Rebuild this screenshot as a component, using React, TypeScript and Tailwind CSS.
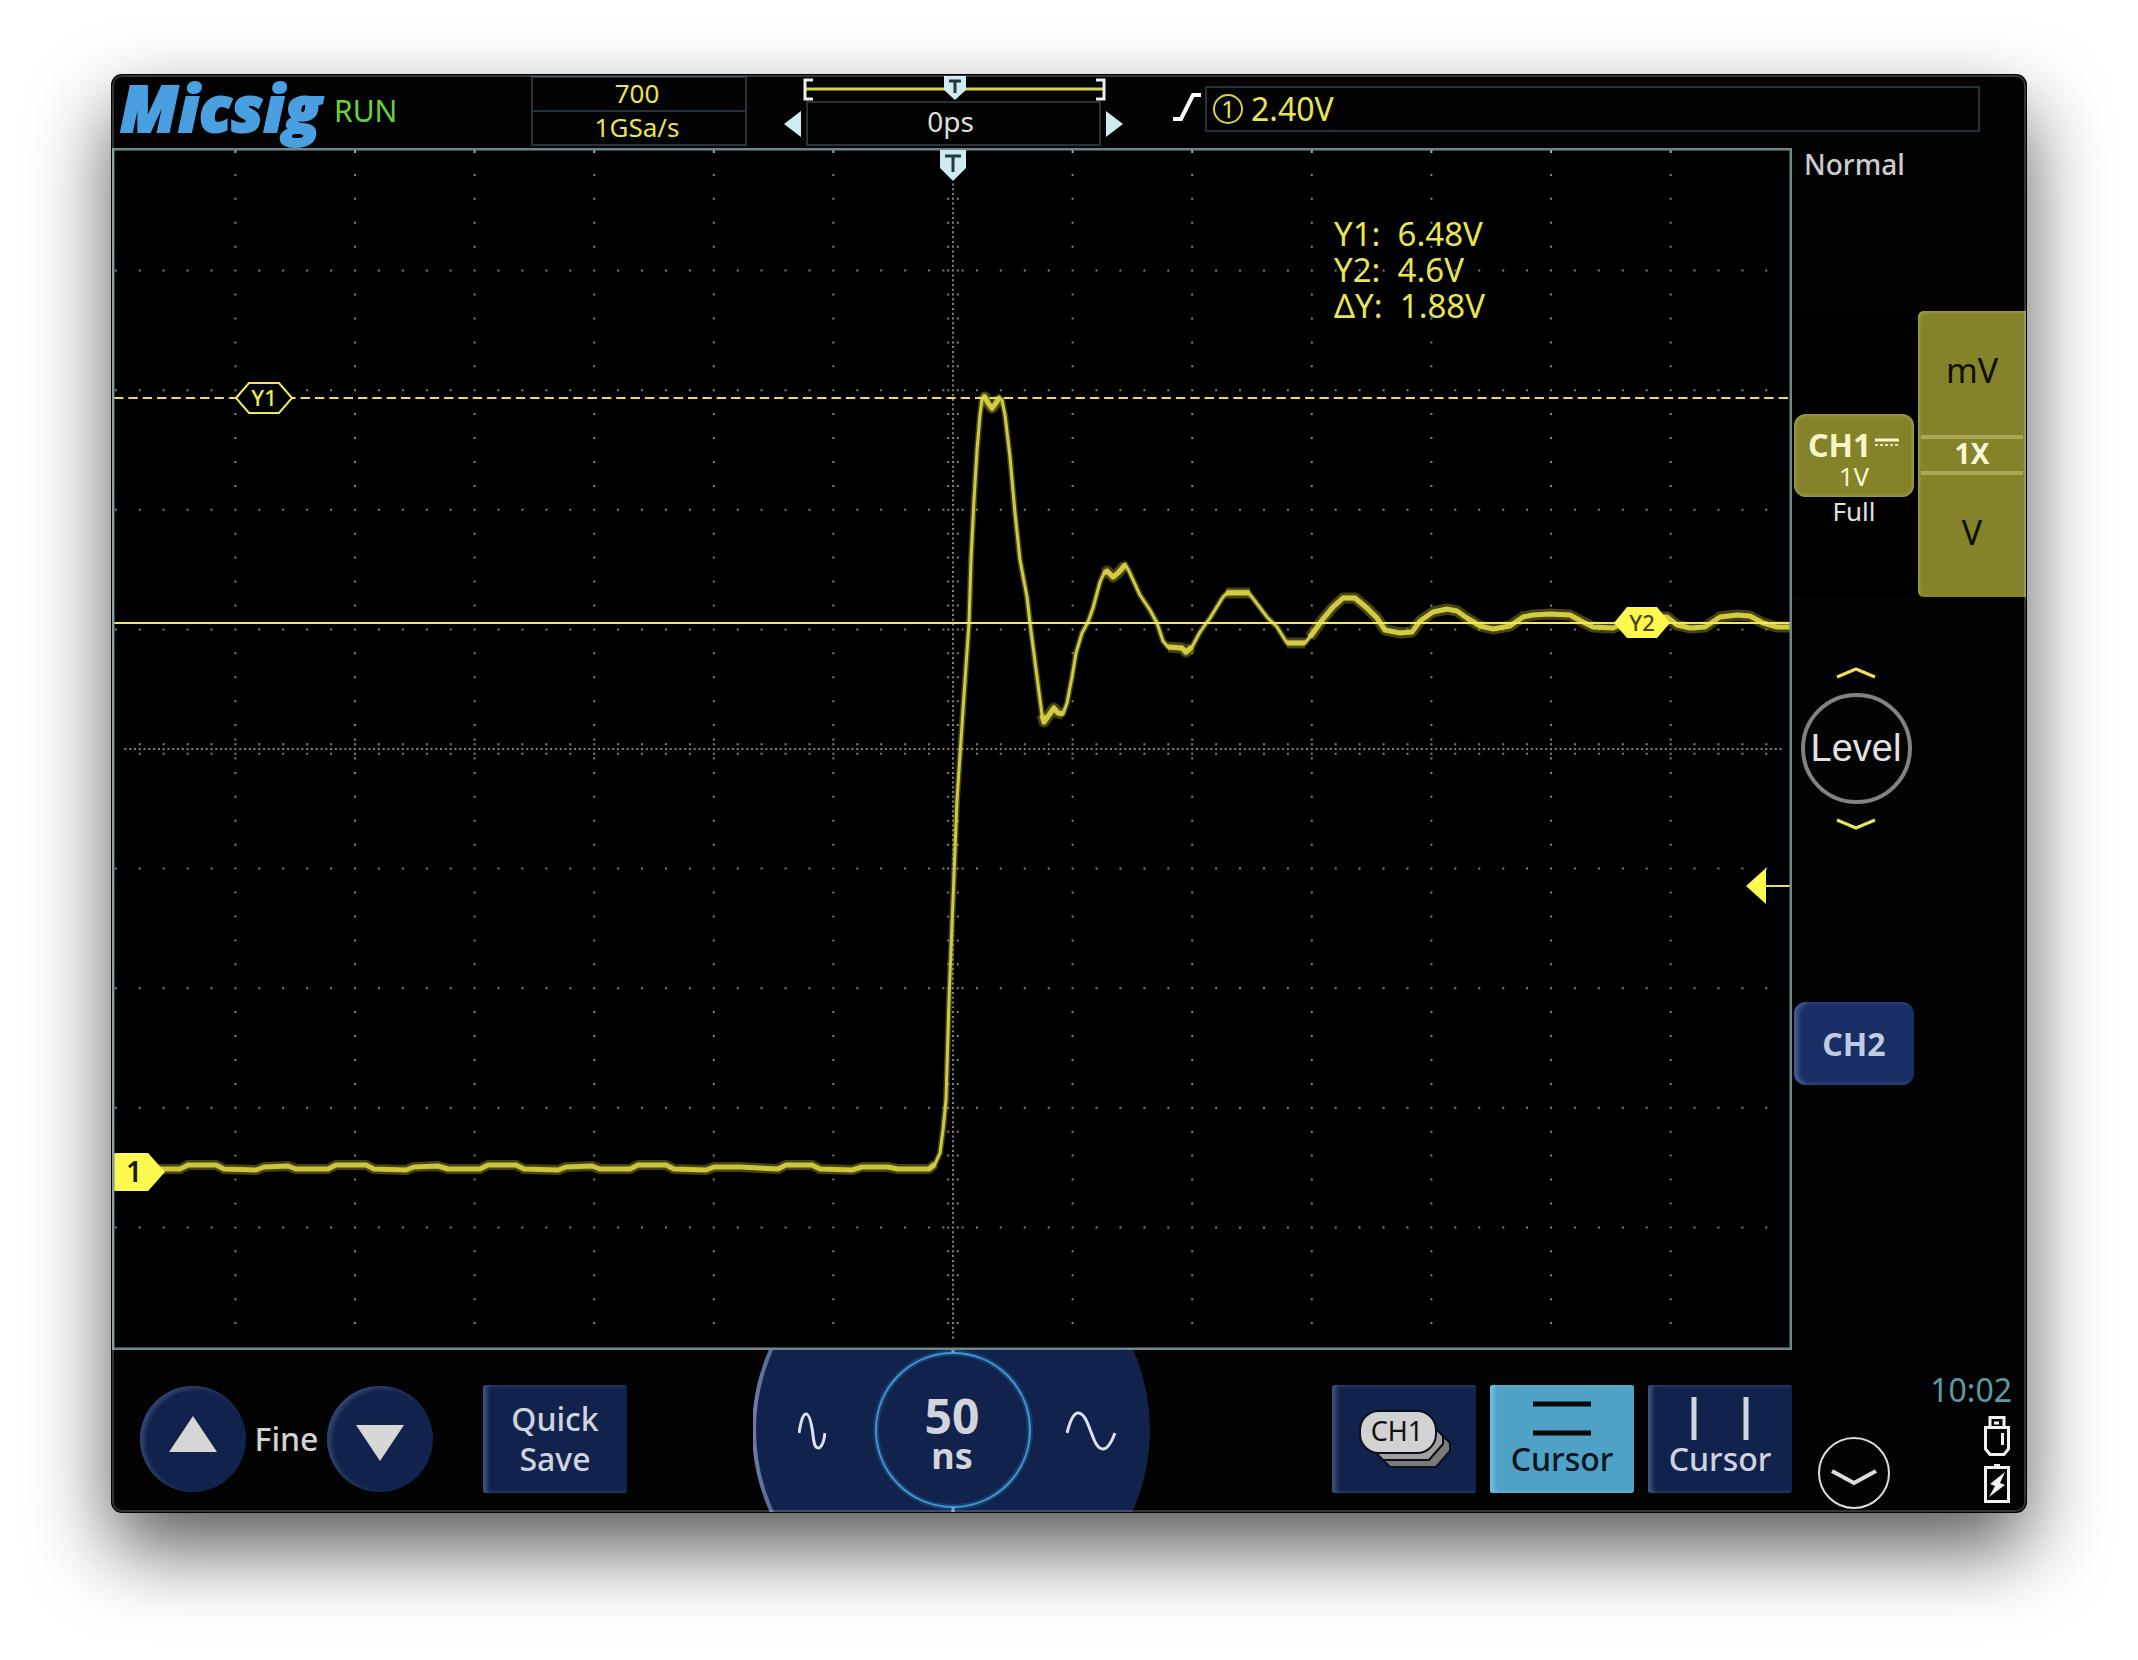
import React from "react";

const YELLOW = "#e8e455";

/* ---------- plot geometry ---------- */
const CX = 953;
const CY = 749;
const DIV = 598 / 5;
const MINOR = DIV / 5;
const FINE = MINOR / 5;

function buildDots(): string {
  const pts: [number, number][] = [];
  for (let r = -4; r <= 4; r++) {
    if (r === 0) continue;
    for (let i = -35; i < 35; i++) pts.push([CX + i * MINOR, CY + r * DIV]);
    for (const k of [-2, -1, 1, 2]) pts.push([CX + k * FINE, CY + r * DIV]);
  }
  for (let c = -6; c <= 6; c++) {
    if (c === 0) continue;
    for (let j = -24; j <= 24; j++) {
      if (j % 5 !== 0) pts.push([CX + c * DIV, CY + j * MINOR]);
    }
    for (const k of [-2, -1, 1, 2]) pts.push([CX + c * DIV, CY + k * FINE]);
  }
  for (let i = -173; i <= 173; i++) pts.push([CX + i * FINE, CY]);
  for (let j = -118; j <= 123; j++) pts.push([CX, CY + j * FINE]);
  for (let i = -34; i <= 34; i++) {
    pts.push([CX + i * MINOR, CY - FINE], [CX + i * MINOR, CY + FINE]);
  }
  for (let j = -23; j <= 24; j++) {
    pts.push([CX - FINE, CY + j * MINOR], [CX + FINE, CY + j * MINOR]);
  }
  return pts.map(([x, y]) => `M${(x - 1).toFixed(1)} ${y.toFixed(1)}h2`).join("");
}

const DOTS = buildDots();
const STUBS = Array.from({ length: 13 }, (_, i) => `M${(CX + (i - 6) * DIV).toFixed(1)} 150v3`).join("");

const BASELINE =
  "M150 1169L180 1169L188 1165L216 1165L224 1169L256 1170L264 1167L288 1166L296 1169L328 1169L336 1165L366 1165L374 1169L406 1170L414 1167L438 1166L448 1169L480 1169L488 1165L516 1165L524 1169L558 1170L566 1167L592 1166L600 1169L630 1169L638 1165L666 1165L674 1169L706 1170L714 1167L740 1167L778 1169L786 1165L812 1165L820 1169L852 1170L862 1167L888 1167L898 1169L929 1169L935 1164";
const RISE =
  "M929 1169L935 1164L940 1153L943 1130L946 1100L949 1000L953 900L957 800L963 710L969 623L971 560L974 500L977 450L980 415L982 399L984 396L988 403L992 409L996 403L999 397L1002 400L1005 415L1010 457L1015 513L1020 560L1027 597L1030 623L1037 677L1042 715L1044 722L1049 715L1054 708L1058 713L1063 714L1067 703L1072 677L1076 653L1082 633L1088 622L1093 608L1100 582L1104 573L1107 571L1113 577L1119 572L1125 564L1129 571L1140 595L1150 610L1157 623L1163 641L1168 647L1182 648L1186 653L1192 647L1200 632L1210 618L1223 597L1228 592L1248 592L1255 601L1267 617L1277 627L1287 643L1305 643L1313 633L1323 619L1333 607L1343 598L1355 598L1367 608L1377 618L1385 630";
const CRESTS =
  "M983 400L985 397L988 403L992 408L996 403L999 398M1042 715L1044 722L1049 715L1054 708L1058 713L1063 714M1104 573L1107 571L1113 577L1119 572L1125 565M1168 647L1182 648L1186 652L1192 647M1226 593L1250 593M1287 643L1305 643M1310 637L1323 619L1333 607L1343 598L1355 598L1367 608L1377 618L1385 630L1400 633L1412 632L1420 621L1433 612L1447 609L1457 611L1467 618L1480 626L1493 629L1510 626L1523 617L1533 615L1550 614L1570 615L1583 622L1593 627L1613 628L1640 616L1667 617L1677 625L1690 628L1705 627L1720 617L1737 615L1750 616L1763 623L1777 627L1790 627";

function Plot() {
  return (
    <svg
      viewBox="112 148 1680 1202"
      className="block h-auto w-full bg-black"
      role="img"
      aria-label="Channel 1 step response"
    >
      <path d={DOTS} stroke="#7d8282" strokeWidth="2" fill="none" />
      <path d={STUBS} stroke="#8fb4b8" strokeWidth="2" fill="none" />
      <path d={BASELINE} stroke="#8a8626" strokeWidth="10" fill="none" opacity="0.5" strokeLinejoin="round" />
      <path d={CRESTS} stroke="#8a8626" strokeWidth="11" fill="none" opacity="0.5" strokeLinejoin="round" />
      <path d={RISE} stroke="#8a8626" strokeWidth="6" fill="none" opacity="0.5" strokeLinejoin="round" />
      <path d={BASELINE} stroke="#cdc63c" strokeWidth="5" fill="none" strokeLinejoin="round" />
      <path d={RISE} stroke="#cfc945" strokeWidth="3" fill="none" strokeLinejoin="round" />
      <path d={CRESTS} stroke="#d3cc40" strokeWidth="5" fill="none" strokeLinejoin="round" />
      <path d="M114 623H1790" stroke="#f0ea5a" strokeWidth="2" />
      <path d="M114 398H1790" stroke="#e5df55" strokeWidth="2" strokeDasharray="9.4 4.95" />
      {/* Y1 tag */}
      <path d="M236 398L249 383H279L292 398L279 413H249Z" fill="#000" stroke="#f0ea5a" strokeWidth="2" />
      <text x="264" y="406" textAnchor="middle" fontFamily="Noto Sans, sans-serif" fontSize="22" fontWeight="500" fill="#f0ea5a">Y1</text>
      {/* Y2 tag */}
      <path d="M1614 623L1627 607H1657L1670 623L1657 638H1627Z" fill="#fdf94e" />
      <text x="1642" y="631" textAnchor="middle" fontFamily="Noto Sans, sans-serif" fontSize="22" fontWeight="500" fill="#4a4812">Y2</text>
      {/* channel zero tag */}
      <path d="M114 1153H148L165 1172L148 1191H114Z" fill="#fdf94e" />
      <text x="134" y="1182" textAnchor="middle" fontFamily="Noto Sans, sans-serif" fontSize="28" fontWeight="600" fill="#1c1b05">1</text>
      {/* trigger level arrow */}
      <path d="M1746 886L1766 868V904Z" fill="#fdf94e" />
      <path d="M1764 886H1790" stroke="#e8e24f" strokeWidth="2" />
      <rect x="113" y="149" width="1678" height="1200" fill="none" stroke="#6d878b" strokeWidth="3" />
      {/* trigger position */}
      <path d="M940 150H966V168L953 181L940 168Z" fill="#cdebf0" />
      <path d="M945 156H961M953 156V172" stroke="#22383c" strokeWidth="3" />
      {/* cursor readout */}
      <g fontFamily="Noto Sans, sans-serif" fontSize="33" fill={YELLOW}>
        <text x="1334" y="246" className="whitespace-pre">{"Y1:  6.48V"}</text>
        <text x="1334" y="282" className="whitespace-pre">{"Y2:  4.6V"}</text>
        <text x="1334" y="318" className="whitespace-pre">{"ΔY:  1.88V"}</text>
      </g>
    </svg>
  );
}

function Header() {
  return (
    <header className="flex h-[73px] items-start pr-[46px]">
      <div className="flex h-full w-[419px] shrink-0 items-start pl-2">
        <span className="w-[214px] font-['Open_Sans',sans-serif] text-[64px] leading-[66px] font-extrabold text-[#4a9fe0] italic [-webkit-text-stroke:2px_#4a9fe0]">
          Micsig
        </span>
        <span className="mt-[18px] text-[30px] leading-9 text-[#6ad03c]">RUN</span>
      </div>
      <div className="mt-px w-[216px] shrink-0 border-2 border-[#27333b] text-center text-[26px] leading-[30px] text-[#e8e455]">
        <div className="h-[34px] border-b-2 border-[#27333b] pr-1">700</div>
        <div className="h-8 pr-1">1GSa/s</div>
      </div>
      <div className="mt-px ml-[37px] w-[340px] shrink-0">
        <svg viewBox="0 0 340 25" className="block w-full" aria-hidden="true">
          <path d="M21 13H321" stroke="#d8d24a" strokeWidth="3" />
          <path d="M29 4H21V23H29M312 4H320V23H312" stroke="#eee" strokeWidth="3" fill="none" />
          <path d="M160 0H182V14L171 24L160 14Z" fill="#cdebf0" />
          <path d="M165 5H177M171 5V17" stroke="#22383c" strokeWidth="3" />
        </svg>
        <div className="flex items-center">
          <button aria-label="Shift left">
            <svg viewBox="0 0 18 28" className="block h-7 w-[18px]"><path d="M0 14L17 1V27Z" fill="#cdebf0" /></svg>
          </button>
          <div className="mx-1 h-[45px] w-[295px] border-2 border-[#27333b] pr-1.5 text-center text-[28px] leading-[37px] text-[#dedede]">
            0ps
          </div>
          <button aria-label="Shift right">
            <svg viewBox="0 0 18 28" className="block h-7 w-[18px]"><path d="M18 14L1 1V27Z" fill="#cdebf0" /></svg>
          </button>
        </div>
      </div>
      <svg viewBox="0 0 28 30" className="mt-[17px] ml-[49px] h-[30px] w-7 shrink-0" aria-label="Rising edge">
        <path d="M0 27H8L20 3H28" stroke="#fff" strokeWidth="4" fill="none" />
      </svg>
      <div className="mt-[11px] ml-1 flex h-[46px] min-w-0 flex-1 items-center gap-2 border-2 border-[#27333b] pl-1.5 text-[32px] leading-9 text-[#e8e455]">
        <span className="flex h-[30px] w-[30px] items-center justify-center rounded-full border-2 border-[#d8d24a] text-2xl leading-6">1</span>
        <span>2.40V</span>
      </div>
    </header>
  );
}

function BlueButton({ active, label, children }: { active?: boolean; label?: string; children: React.ReactNode }) {
  return (
    <button
      aria-label={label}
      className={
        active
          ? "flex h-[108px] w-36 flex-col items-center rounded-[3px] bg-[#4fa1c6] text-[#06141c] shadow-[inset_4px_0_4px_#6fc0e0]"
          : "flex h-[108px] w-36 flex-col items-center rounded-[3px] bg-[#11234d] text-[#cfd3df] shadow-[inset_4px_0_4px_#42547f]"
      }
    >
      {children}
    </button>
  );
}

function RoundButton({ down, label }: { down?: boolean; label: string }) {
  return (
    <button
      aria-label={label}
      className="flex h-[106px] w-[106px] items-center justify-center rounded-full bg-[#11234d] shadow-[inset_4px_2px_4px_#34466f]"
    >
      <svg viewBox="0 0 106 106" className="block h-full w-full">
        <path d={down ? "M29 39H77L53 75Z" : "M53 30L77 66H29Z"} fill="#d6d6d6" />
      </svg>
    </button>
  );
}

function Dial() {
  return (
    <div className="relative h-[162px] w-[398px] overflow-hidden">
      <svg viewBox="0 0 398 162" className="absolute inset-0 h-full w-full" aria-hidden="true">
        <defs>
          <linearGradient id="rim" x1="0" x2="1" y1="0" y2="0">
            <stop offset="0" stopColor="#6a7ba6" />
            <stop offset="0.1" stopColor="#3c4f80" />
            <stop offset="0.2" stopColor="#11234d" />
          </linearGradient>
        </defs>
        <circle cx="198" cy="80" r="197" fill="#11234d" stroke="url(#rim)" strokeWidth="4" />
        <circle cx="200" cy="80" r="77" fill="none" stroke="#153f73" strokeWidth="6" />
        <circle cx="200" cy="80" r="77" fill="none" stroke="#4a93c9" strokeWidth="2" />
        <path d="M200 0V3M200 157V162" stroke="#5aa7dc" strokeWidth="3" />
      </svg>
      <div className="relative flex h-full items-center pb-1">
        <button aria-label="Decrease time base" className="flex h-full w-[118px] items-center justify-center">
          <svg viewBox="0 0 28 40" className="mt-1 h-10 w-7">
            <path d="M1 22C3 10 5 3 8 3C12 3 14 16 15 24C16 33 17 37 20 37C24 37 26 30 27 22" fill="none" stroke="#dde2ee" strokeWidth="3" />
          </svg>
        </button>
        <div className="w-[162px] pt-2.5 text-center font-bold text-[#d2d4dc]">
          <div className="text-[48px] leading-[44px]">50</div>
          <div className="text-[36px] leading-9">ns</div>
        </div>
        <button aria-label="Increase time base" className="flex h-full w-[116px] items-center justify-center">
          <svg viewBox="0 0 50 40" className="mt-1 h-10 w-[50px]">
            <path d="M1 22C4 10 8 2 12 2C19 2 22 14 25 21C28 29 31 38 37 38C42 38 46 30 49 22" fill="none" stroke="#dde2ee" strokeWidth="3" />
          </svg>
        </button>
      </div>
    </div>
  );
}

function BottomBar() {
  return (
    <div className="grid h-[162px] grid-cols-[1fr_auto_1fr] items-start">
      <div className="flex items-center pt-[35px] pl-7">
        <RoundButton label="Fine up" />
        <span className="w-[81px] text-center text-[32px] leading-9 font-medium text-[#d2d2d2]">Fine</span>
        <RoundButton down label="Fine down" />
        <div className="ml-[50px]">
          <BlueButton>
            <span className="mt-[14px] text-[32px] leading-10 font-medium">
              Quick
              <br />
              Save
            </span>
          </BlueButton>
        </div>
      </div>
      <Dial />
      <div className="flex justify-end gap-[14px] pt-[35px]">
        <BlueButton label="Channel select CH1">
          <svg viewBox="0 0 144 108" className="h-full w-full">
            <g stroke="#0a0f1c" strokeWidth="2">
              <path d="M56 40H100L118 58V66L104 82H58L42 66V58Z" fill="#7a7a7a" />
              <path d="M49 33H93L111 51V59L97 75H51L35 59V51Z" fill="#a0a0a0" />
              <rect x="28" y="26" width="76" height="42" rx="19" fill="#d2d2d2" />
            </g>
            <text x="65" y="56" textAnchor="middle" fontFamily="Noto Sans, sans-serif" fontSize="27" fill="#111">CH1</text>
          </svg>
        </BlueButton>
        <BlueButton active>
          <svg viewBox="0 0 58 48" className="mt-3 h-12 w-[58px]">
            <path d="M0 7H58M0 36H58" stroke="#05090c" strokeWidth="5" />
          </svg>
          <span className="-mt-1 text-[32px] leading-9 font-medium">Cursor</span>
        </BlueButton>
        <BlueButton>
          <svg viewBox="0 0 58 48" className="mt-3 h-12 w-[58px]">
            <path d="M3 0V43M55 0V43" stroke="#d2d5de" strokeWidth="5" />
          </svg>
          <span className="-mt-1 text-[32px] leading-9 font-medium">Cursor</span>
        </BlueButton>
      </div>
    </div>
  );
}

function SidePanel() {
  return (
    <aside className="flex w-[234px] shrink-0 flex-col">
      <div className="h-[34px] pl-3 text-[28px] leading-8 font-medium text-[#cccccc]">Normal</div>
      <div className="mt-[129px] flex h-[286px] bg-black">
        <div className="flex w-[126px] flex-col items-center pt-[103px] pr-0.5">
          <button className="h-[83px] w-[120px] rounded-xl bg-[#84832a] text-[#f8f6c8] shadow-[inset_0_0_4px_#b5b46a]">
            <span className="flex items-center gap-1 pt-1.5 pl-[14px] text-[32px] leading-[34px] font-bold">
              CH1
              <svg viewBox="0 0 24 10" className="-mt-1 h-[10px] w-6" aria-hidden="true">
                <path d="M0 2H24" stroke="#f8f6c8" strokeWidth="3" />
                <path d="M0 7H24" stroke="#e6e4a8" strokeWidth="2" strokeDasharray="3 2" />
              </svg>
            </span>
            <span className="block text-[26px] leading-7">1V</span>
          </button>
          <span className="text-[26px] leading-7 text-[#e2e2e2]">Full</span>
        </div>
        <div className="flex flex-1 flex-col rounded-l-md bg-[#84832a] px-[3px] text-center text-[34px] text-[#0f0f04] shadow-[inset_2px_2px_3px_#9c9b48]">
          <button className="h-[124px] w-full pb-1.5 leading-10">mV</button>
          <div className="h-10 border-y-4 border-[#aaa75a] text-[28px] leading-[29px] font-bold text-[#f8f6d8]">1X</div>
          <button className="h-[122px] w-full pb-2 leading-10">V</button>
        </div>
      </div>
      <div className="mt-[69px] flex w-32 flex-col items-center gap-[14px]">
        <button aria-label="Level up">
          <svg viewBox="0 0 40 13" className="block h-[13px] w-10"><path d="M1 11L20 3L39 11" fill="none" stroke="#e8e455" strokeWidth="3" /></svg>
        </button>
        <button className="flex h-[111px] w-[111px] items-center justify-center rounded-full border-4 border-[#828282] font-['Liberation_Sans',sans-serif] text-[38px] text-[#e2e2e2]">
          Level
        </button>
        <button aria-label="Level down">
          <svg viewBox="0 0 40 13" className="block h-[13px] w-10"><path d="M1 2L20 10L39 2" fill="none" stroke="#e8e455" strokeWidth="3" /></svg>
        </button>
      </div>
      <button className="mt-[171px] ml-0.5 h-[83px] w-[120px] rounded-xl bg-[#182f66] text-[32px] font-bold text-[#c3cbe0] shadow-[inset_4px_0_5px_#4a5f95]">
        CH2
      </button>
      <div className="mt-auto flex items-end justify-between pr-[14px] pl-[25px]">
        <button aria-label="Open menu">
          <svg viewBox="0 0 74 76" className="block h-[76px] w-[74px]">
            <circle cx="37" cy="37" r="35" fill="none" stroke="#dcdcdc" strokeWidth="2" />
            <path d="M15 35L37 47L59 35" fill="none" stroke="#dcdcdc" strokeWidth="4" />
          </svg>
        </button>
        <div className="flex flex-col items-end">
          <time className="text-[32px] leading-10 text-[#5b9aa5]">10:02</time>
          <svg viewBox="0 0 26 40" className="mt-1.5 mr-0.5 h-10 w-[26px]" aria-label="USB">
            <path d="M6 11V1.5H20V11M1.5 11.5H24.5V33L20 38.5H6L1.5 33Z" fill="none" stroke="#f2f2f2" strokeWidth="3" />
            <path d="M10 7H15M18.5 17V29" stroke="#f2f2f2" strokeWidth="3" />
          </svg>
          <svg viewBox="0 0 26 48" className="mt-2 mr-0.5 h-12 w-[26px]" aria-label="Battery charging">
            <path d="M1.5 3.500H24.500V37.500H1.500Z" fill="none" stroke="#f2f2f2" strokeWidth="3" />
            <path d="M10 1.500H16" stroke="#f2f2f2" strokeWidth="3" />
            <path d="M21 8L6 20L11 22L5 33L21 21L16 19Z" fill="#f2f2f2" />
          </svg>
        </div>
      </div>
    </aside>
  );
}

export default function App() {
  return (
    <div className="min-h-screen bg-white px-28 pt-[75px] pb-[148px] font-['Noto_Sans',sans-serif]">
      <main className="relative overflow-hidden rounded-[10px] bg-[#030303] shadow-[0_0_0_1px_#000,0_36px_80px_rgba(0,0,0,0.66)]">
        <Header />
        <div className="flex">
          <div className="min-w-0 flex-1">
            <Plot />
            <BottomBar />
          </div>
          <SidePanel />
        </div>
        <div className="pointer-events-none absolute inset-0 rounded-[10px] border-2 border-white/20" />
      </main>
    </div>
  );
}
